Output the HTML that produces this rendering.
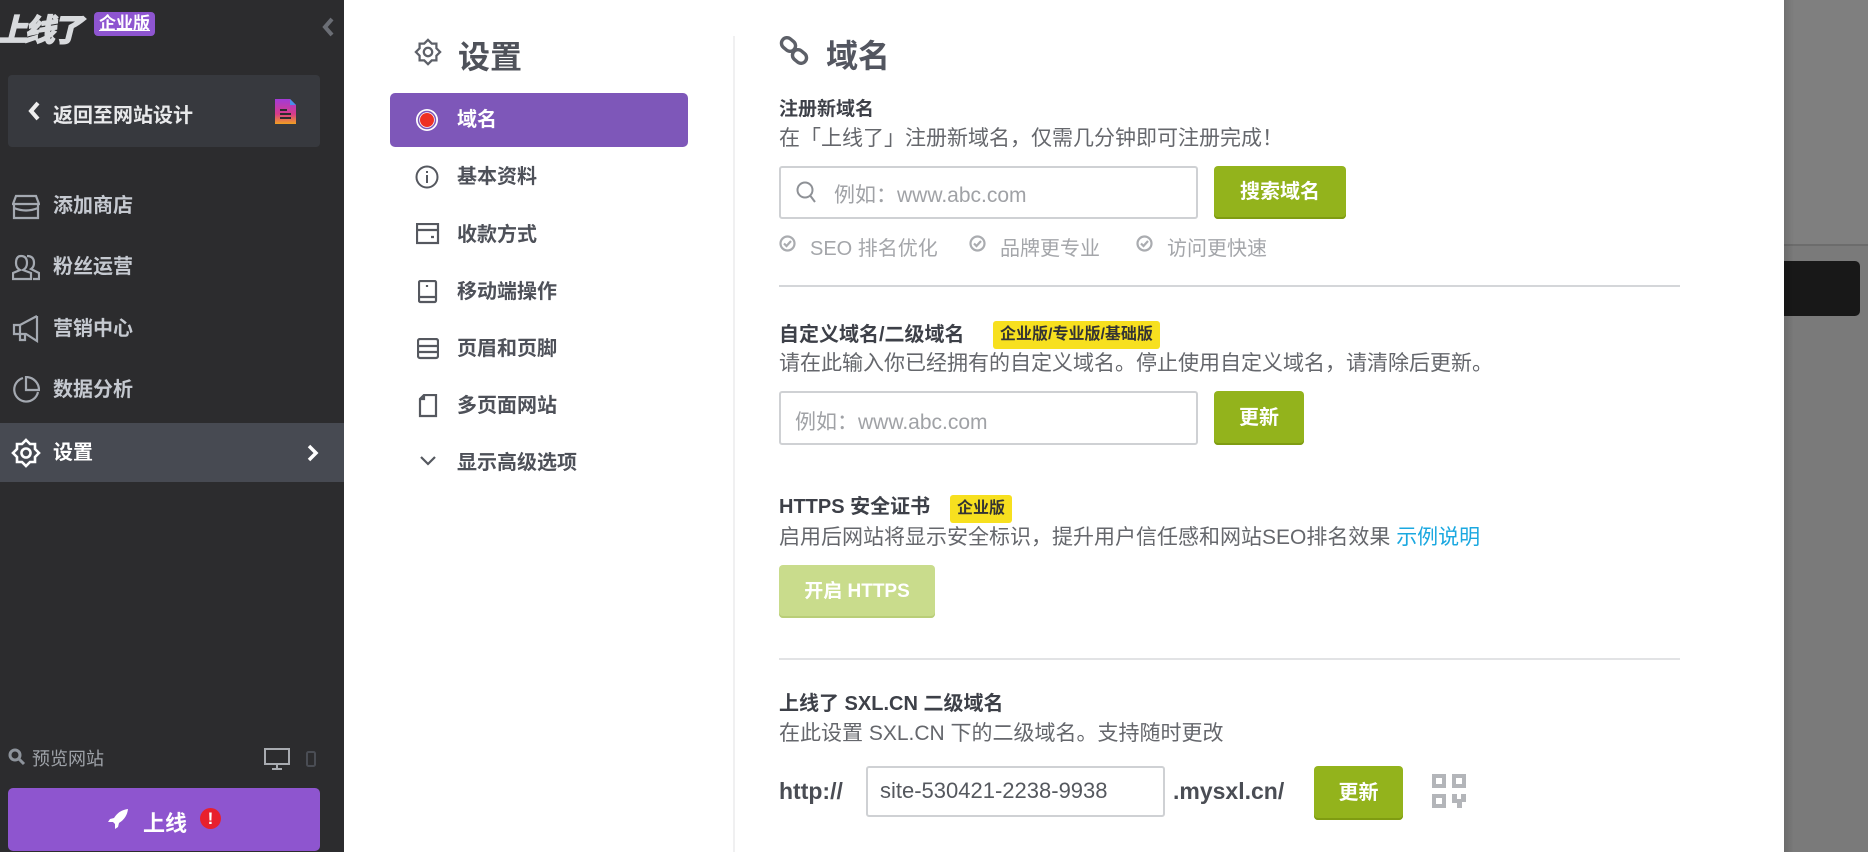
<!DOCTYPE html>
<html><head><meta charset="utf-8"><style>
*{margin:0;padding:0;box-sizing:border-box}
body{width:1868px;height:852px;overflow:hidden;position:relative;font-family:"Liberation Sans","Noto Sans CJK SC",sans-serif;background:#fff}
.a{position:absolute;white-space:nowrap}
#side{position:absolute;left:0;top:0;width:344px;height:852px;background:#2c2c2e}
.si{position:absolute;left:53px;font-size:20px;font-weight:bold;color:#c5c9d0;line-height:24px}
.nav{position:absolute;left:457px;font-size:20px;font-weight:bold;color:#4e5159;line-height:24px}
.h{font-size:19px;font-weight:bold;color:#3d4048;line-height:24px}
.d{font-size:21px;color:#65676c;line-height:24px}
.inp{position:absolute;border:2px solid #cfd1d4;border-radius:3px;background:#fff}
.btn{position:absolute;background:#93b31c;border-radius:4px;color:#fff;font-weight:bold;font-size:20px;text-align:center;box-shadow:inset 0 -2px 0 #7f9c12}
.badge{position:absolute;background:#f7e01f;color:#333;font-weight:bold;font-size:16px;line-height:28px;height:28px;padding:0 7px;border-radius:3px}
</style></head><body>
<div id="side">
  <div class="a" style="left:-4px;top:5px;font-size:31px;font-weight:900;font-style:italic;color:#d8dadd;letter-spacing:-3px;-webkit-text-stroke:1px #d8dadd">上线了</div>
  <div class="a" style="left:94px;top:12px;width:61px;height:24px;background:#8e55d0;border-radius:4px;color:#fff;font-weight:bold;font-size:17px;line-height:24px;text-align:center;text-decoration:underline">企业版</div>
  <svg class="a" style="left:320px;top:16px" width="16" height="22" viewBox="0 0 16 22"><path d="M12 3 L5 11 L12 19" stroke="#6b6e75" stroke-width="4" fill="none"/></svg>
  <div class="a" style="left:8px;top:75px;width:312px;height:72px;background:#37393e;border-radius:4px"></div>
  <svg class="a" style="left:26px;top:100px" width="16" height="22" viewBox="0 0 16 22"><path d="M12 3 L5 11 L12 19" stroke="#eee" stroke-width="4" fill="none"/></svg>
  <div class="a" style="left:53px;top:99px;font-size:20px;font-weight:bold;color:#e8e9eb">返回至网站设计</div>
  <svg class="a" style="left:275px;top:99px" width="22" height="25" viewBox="0 0 22 25"><defs><linearGradient id="g" x1="0" y1="0" x2="0" y2="1"><stop offset="0" stop-color="#a23bd8"/><stop offset=".6" stop-color="#d83b8a"/><stop offset="1" stop-color="#f0a020"/></linearGradient></defs><path d="M0 0H15L21 6V25H0Z" fill="url(#g)"/><path d="M15 0V6H21" fill="#4a8ee8"/><path d="M5 11H12M5 15H16M5 19H16" stroke="#2c2c2e" stroke-width="2"/></svg>
  <svg class="a" style="left:12px;top:194px" width="28" height="26" viewBox="0 0 28 26" fill="none" stroke="#a4a9b1" stroke-width="2.2"><path d="M4 2H24L27 10H1Z"/><path d="M2 10V24H26V10"/><path d="M2 14Q14 19 26 14"/></svg>
  <div class="si" style="top:194px">添加商店</div>
  <svg class="a" style="left:12px;top:253px" width="28" height="28" viewBox="0 0 28 28" fill="none" stroke="#a4a9b1" stroke-width="2.2"><path d="M9 3Q15 3 15 10Q15 15 11 17L19 20V26H1V20L8 17Q4 15 4 10Q4 3 9 3Z"/><path d="M15 3Q22 3 22 10Q22 14 19 16L27 20V26H21"/></svg>
  <div class="si" style="top:255px">粉丝运营</div>
  <svg class="a" style="left:12px;top:315px" width="28" height="28" viewBox="0 0 28 28" fill="none" stroke="#a4a9b1" stroke-width="2.2"><path d="M25 1V26L14 19H8L2 19V10H8L25 1"/><path d="M8 10V25H13V19"/></svg>
  <div class="si" style="top:317px">营销中心</div>
  <svg class="a" style="left:12px;top:376px" width="28" height="28" viewBox="0 0 28 28" fill="none" stroke="#a4a9b1" stroke-width="2.2"><path d="M11 2A12 12 0 1 0 26 16"/><path d="M14 1V14H27A13 13 0 0 0 14 1Z"/></svg>
  <div class="si" style="top:378px">数据分析</div>
  <div class="a" style="left:0;top:423px;width:344px;height:59px;background:#474a52"></div>
  <svg class="a" style="left:11px;top:438px" width="30" height="30" viewBox="0 0 30 30" fill="none" stroke="#fff" stroke-width="2.6"><path d="M15 2L19 6H24V11L28 15L24 19V24H19L15 28L11 24H6V19L2 15L6 11V6H11Z"/><circle cx="15" cy="15" r="4.5"/></svg>
  <div class="si" style="top:441px;color:#fff">设置</div>
  <svg class="a" style="left:306px;top:443px" width="14" height="20" viewBox="0 0 14 20"><path d="M3 3L10 10L3 17" stroke="#fff" stroke-width="3.5" fill="none"/></svg>
  <svg class="a" style="left:8px;top:748px" width="18" height="18" viewBox="0 0 18 18" fill="none" stroke="#8d939b" stroke-width="3"><circle cx="7" cy="7" r="5"/><path d="M11 11L16 16"/></svg>
  <div class="a" style="left:32px;top:745px;font-size:18px;color:#9ea2a8">预览网站</div>
  <svg class="a" style="left:264px;top:748px" width="26" height="22" viewBox="0 0 26 22" fill="none" stroke="#a8abb0" stroke-width="2"><rect x="1" y="1" width="24" height="15"/><path d="M13 16V20M8 21H18"/></svg>
  <svg class="a" style="left:306px;top:751px" width="10" height="16" viewBox="0 0 10 16"><rect x="1" y="1" width="8" height="14" rx="1.5" fill="none" stroke="#4a4d54" stroke-width="2"/></svg>
  <div class="a" style="left:8px;top:788px;width:312px;height:63px;background:#8e55cf;border-radius:5px"></div>
  <svg class="a" style="left:107px;top:808px" width="22" height="22" viewBox="0 0 22 22"><path d="M21 1Q12 2 7 10L3 11L1 14L6 14L8 16L8 21L11 19L12 15Q20 10 21 1Z" fill="#fff"/></svg>
  <div class="a" style="left:143px;top:806px;font-size:22px;font-weight:bold;color:#fff">上线</div>
  <div class="a" style="left:200px;top:808px;width:21px;height:21px;border-radius:50%;background:#e8202e;color:#fff;font-weight:bold;font-size:17px;line-height:21px;text-align:center">!</div>
</div>
<div style="position:absolute;left:1784px;top:0;width:84px;height:852px;background:#7a7a7a;z-index:1"></div>
<div style="position:absolute;left:1784px;top:0;width:84px;height:246px;background:#7f7f7f;border-bottom:2px solid #6c6c6c;z-index:1"></div>
<div style="position:absolute;left:1784px;top:261px;width:76px;height:55px;background:#181818;border-radius:0 5px 5px 0;z-index:1"></div>
<div style="position:absolute;left:1784px;top:0;width:10px;height:852px;background:linear-gradient(90deg,rgba(0,0,0,.12),rgba(0,0,0,0));z-index:2"></div>
<svg class="a" style="left:414px;top:38px" width="28" height="28" viewBox="0 0 30 30" fill="none" stroke="#5d6068" stroke-width="2.4"><path d="M15 2L19 6H24V11L28 15L24 19V24H19L15 28L11 24H6V19L2 15L6 11V6H11Z"/><circle cx="15" cy="15" r="4.5"/></svg>
<div class="a" style="left:458px;top:32px;font-size:32px;font-weight:bold;color:#4f525a">设置</div>
<div class="a" style="left:390px;top:93px;width:298px;height:54px;background:#7e57b9;border-radius:5px"></div>
<svg class="a" style="left:415px;top:108px" width="24" height="24" viewBox="0 0 24 24"><circle cx="12" cy="12" r="11" fill="#fff"/><circle cx="12" cy="12" r="8.5" fill="none" stroke="#7e57b9" stroke-width="1.5"/><circle cx="12" cy="12" r="7" fill="#ee3124"/></svg>
<div class="nav" style="top:108px;color:#fff">域名</div>
<svg class="a" style="left:415px;top:165px" width="24" height="24" viewBox="0 0 24 24" fill="none" stroke="#55585f" stroke-width="2"><circle cx="12" cy="12" r="10.5"/><path d="M12 10V18M12 6V8"/></svg>
<div class="nav" style="top:165px">基本资料</div>
<svg class="a" style="left:416px;top:223px" width="24" height="22" viewBox="0 0 24 22" fill="none" stroke="#55585f" stroke-width="2.2"><rect x="1" y="1" width="21" height="19"/><path d="M1 7H22M15 14H18"/></svg>
<div class="nav" style="top:223px">收款方式</div>
<svg class="a" style="left:418px;top:280px" width="20" height="24" viewBox="0 0 20 24" fill="none" stroke="#55585f" stroke-width="2.2"><rect x="1" y="1" width="17" height="21" rx="1.5"/><path d="M1 17H18M9 5V7"/></svg>
<div class="nav" style="top:280px">移动端操作</div>
<svg class="a" style="left:417px;top:338px" width="22" height="22" viewBox="0 0 22 22" fill="none" stroke="#55585f" stroke-width="2.2"><rect x="1" y="1" width="20" height="19" rx="2"/><path d="M1 8H21M1 14H21"/></svg>
<div class="nav" style="top:337px">页眉和页脚</div>
<svg class="a" style="left:418px;top:394px" width="20" height="24" viewBox="0 0 20 24" fill="none" stroke="#55585f" stroke-width="2.2"><path d="M6 1H18V22H2V5Z"/><path d="M6 1V5H2"/></svg>
<div class="nav" style="top:394px">多页面网站</div>
<svg class="a" style="left:419px;top:455px" width="18" height="12" viewBox="0 0 18 12"><path d="M2 2L9 9L16 2" stroke="#55585f" stroke-width="2.2" fill="none"/></svg>
<div class="nav" style="top:451px">显示高级选项</div>
<div class="a" style="left:733px;top:36px;width:2px;height:816px;background:#f0f0f1"></div>
<svg class="a" style="left:779px;top:36px" width="30" height="30" viewBox="0 0 30 30" fill="none" stroke="#5d6068" stroke-width="3.4"><rect x="2" y="3" width="15" height="11" rx="5.5" transform="rotate(40 9.5 8.5)"/><rect x="13" y="15" width="15" height="11" rx="5.5" transform="rotate(40 20.5 20.5)"/></svg>
<div class="a" style="left:826px;top:31px;font-size:32px;font-weight:bold;color:#535660">域名</div>
<div class="a h" style="left:779px;top:98px">注册新域名</div>
<div class="a d" style="left:779px;top:127px">在「上线了」注册新域名，仅需几分钟即可注册完成！</div>
<div class="inp" style="left:779px;top:166px;width:419px;height:53px"></div>
<svg class="a" style="left:796px;top:181px" width="22" height="24" viewBox="0 0 22 24" fill="none" stroke="#8e9196" stroke-width="2"><circle cx="9" cy="9" r="7.5"/><path d="M14.5 15L19 21"/></svg>
<div class="a" style="left:834px;top:179px;font-size:21px;color:#a0a2a6">例如：www.abc.com</div>
<div class="btn" style="left:1214px;top:166px;width:132px;height:53px;line-height:53px">搜索域名</div>
<svg class="a" style="left:779px;top:235px" width="17" height="17" viewBox="0 0 17 17" fill="none" stroke="#aaacb0" stroke-width="2.2"><circle cx="8.5" cy="8.5" r="7"/><path d="M5 8.5L7.5 11L12 6"/></svg>
<div class="a" style="left:810px;top:232px;font-size:20px;color:#a4a6aa">SEO 排名优化</div>
<svg class="a" style="left:969px;top:235px" width="17" height="17" viewBox="0 0 17 17" fill="none" stroke="#aaacb0" stroke-width="2.2"><circle cx="8.5" cy="8.5" r="7"/><path d="M5 8.5L7.5 11L12 6"/></svg>
<div class="a" style="left:1000px;top:232px;font-size:20px;color:#a4a6aa">品牌更专业</div>
<svg class="a" style="left:1136px;top:235px" width="17" height="17" viewBox="0 0 17 17" fill="none" stroke="#aaacb0" stroke-width="2.2"><circle cx="8.5" cy="8.5" r="7"/><path d="M5 8.5L7.5 11L12 6"/></svg>
<div class="a" style="left:1167px;top:232px;font-size:20px;color:#a4a6aa">访问更快速</div>
<div class="a" style="left:779px;top:285px;width:901px;height:2px;background:#d4d6d9"></div>
<div class="a h" style="left:779px;top:323px;font-size:20px">自定义域名/二级域名</div>
<div class="badge" style="left:993px;top:321px">企业版/专业版/基础版</div>
<div class="a d" style="left:779px;top:352px">请在此输入你已经拥有的自定义域名。停止使用自定义域名，请清除后更新。</div>
<div class="inp" style="left:779px;top:391px;width:419px;height:54px"></div>
<div class="a" style="left:795px;top:406px;font-size:21px;color:#a0a2a6">例如：www.abc.com</div>
<div class="btn" style="left:1214px;top:391px;width:90px;height:54px;line-height:54px">更新</div>
<div class="a h" style="left:779px;top:495px;font-size:20px">HTTPS 安全证书</div>
<div class="badge" style="left:950px;top:495px">企业版</div>
<div class="a d" style="left:779px;top:526px">启用后网站将显示安全标识，提升用户信任感和网站SEO排名效果 <span style="color:#1ba8e0">示例说明</span></div>
<div class="btn" style="left:779px;top:565px;width:156px;height:53px;line-height:53px;background:#c9dc8c;box-shadow:inset 0 -2px 0 #b9ce78;font-size:19px">开启 HTTPS</div>
<div class="a" style="left:779px;top:658px;width:901px;height:2px;background:#e2e3e5"></div>
<div class="a h" style="left:779px;top:692px;font-size:20px">上线了 SXL.CN 二级域名</div>
<div class="a d" style="left:779px;top:722px">在此设置 SXL.CN 下的二级域名。支持随时更改</div>
<div class="a" style="left:779px;top:778px;font-size:23px;font-weight:bold;color:#4a4d54">http://</div>
<div class="inp" style="left:866px;top:766px;width:299px;height:51px"></div>
<div class="a" style="left:880px;top:778px;font-size:22px;color:#55585e">site-530421-2238-9938</div>
<div class="a" style="left:1173px;top:778px;font-size:23px;font-weight:bold;color:#4a4d54">.mysxl.cn/</div>
<div class="btn" style="left:1314px;top:766px;width:89px;height:54px;line-height:54px">更新</div>
<svg class="a" style="left:1432px;top:774px" width="34" height="34" viewBox="0 0 34 34" fill="#b3b5b9"><path d="M0 0H14V14H0ZM4 4V10H10V4Z"/><path d="M20 0H34V14H20ZM24 4V10H30V4Z"/><path d="M0 20H14V34H0ZM4 24V30H10V24Z"/><path d="M20 20H25V25H29V20H34V28H30V34H25V29H20Z"/></svg>
</body></html>
